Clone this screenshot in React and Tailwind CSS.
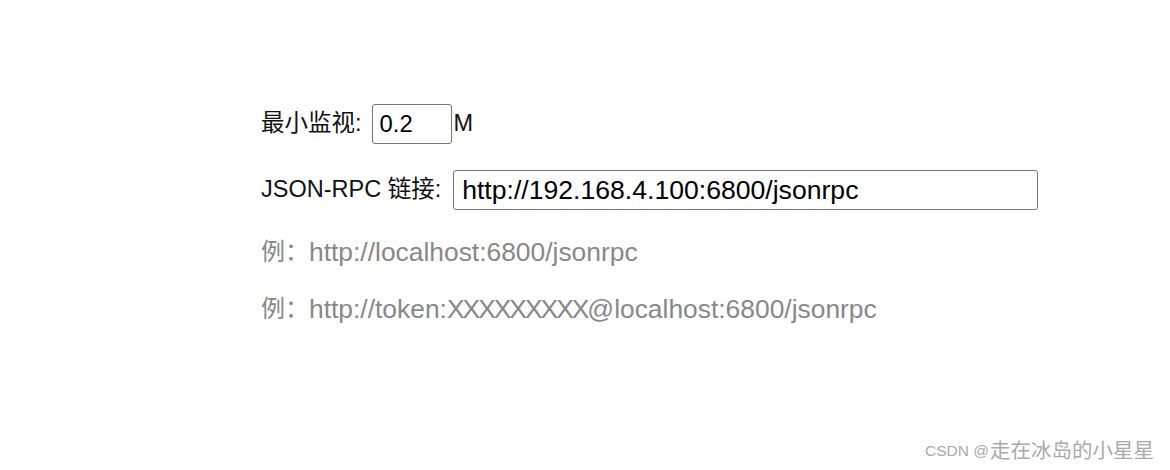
export default function App() {
  return (
    <div className="w-[1170px] h-[470px] bg-white flex flex-col overflow-hidden font-['Liberation_Sans','Noto_Sans_CJK_SC',sans-serif]">
      <div className="pl-[261px] pt-[104px] flex flex-col">
        <div className="flex items-center h-[40px] text-[23.5px] text-[#111]">
          <span>最小监视:</span>
          <input
            defaultValue="0.2"
            className="ml-[10px] w-[80px] h-[40px] border border-[#767676] rounded-[3px] pl-[7px] text-[23.8px] text-black outline-none"
          />
          <span className="ml-[2px]">M</span>
        </div>
        <div className="mt-[26px] flex items-center h-[40px] text-[23.5px] text-[#111]">
          <span>JSON-RPC 链接:</span>
          <input
            defaultValue="http://192.168.4.100:6800/jsonrpc"
            className="ml-[12px] w-[585px] h-[40px] border border-[#767676] rounded-[3px] pl-[8px] text-[26.6px] text-black outline-none"
          />
        </div>
        <div className="mt-[27px] leading-[30px] h-[30px] text-[#888888] flex items-center">
          <span className="text-[24px]">例：</span>
          <span className="text-[26.4px]">http://localhost:6800/jsonrpc</span>
        </div>
        <div className="mt-[27px] leading-[30px] h-[30px] text-[#888888] flex items-center">
          <span className="text-[24px]">例：</span>
          <span className="text-[26.4px]">
            http://token:<span className="tracking-[-2px]">XXXXXXXXX</span>@localhost:6800/jsonrpc
          </span>
        </div>
      </div>
      <div className="mt-auto self-end pr-[16px] pb-[7px] flex items-center text-[#aaaaaa] leading-[24px]">
        <span className="text-[15.5px]">CSDN @</span>
        <span className="text-[20.5px] ml-[1px]">走在冰岛的小星星</span>
      </div>
    </div>
  );
}
